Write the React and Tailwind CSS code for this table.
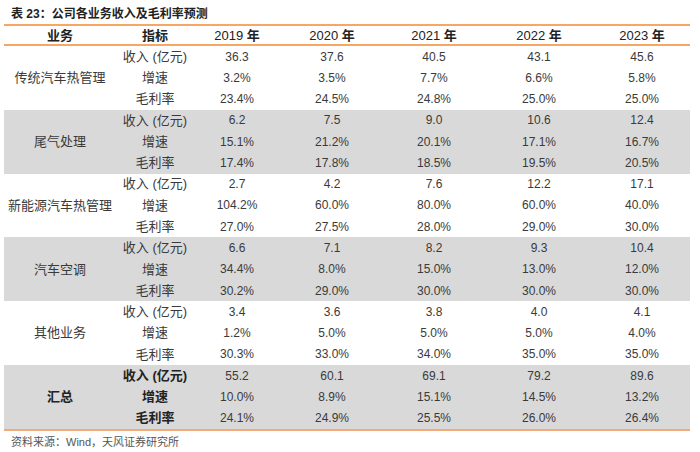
import React from 'react'

const font = { fontFamily: '"Liberation Sans", "Noto Sans CJK SC", sans-serif' }

const years = ['2019', '2020', '2021', '2022', '2023']
const metrics = ['收入 (亿元)', '增速', '毛利率']

const groups = [
  {
    name: '传统汽车热管理',
    rows: [
      ['36.3', '37.6', '40.5', '43.1', '45.6'],
      ['3.2%', '3.5%', '7.7%', '6.6%', '5.8%'],
      ['23.4%', '24.5%', '24.8%', '25.0%', '25.0%'],
    ],
  },
  {
    name: '尾气处理',
    gray: true,
    rows: [
      ['6.2', '7.5', '9.0', '10.6', '12.4'],
      ['15.1%', '21.2%', '20.1%', '17.1%', '16.7%'],
      ['17.4%', '17.8%', '18.5%', '19.5%', '20.5%'],
    ],
  },
  {
    name: '新能源汽车热管理',
    rows: [
      ['2.7', '4.2', '7.6', '12.2', '17.1'],
      ['104.2%', '60.0%', '80.0%', '60.0%', '40.0%'],
      ['27.0%', '27.5%', '28.0%', '29.0%', '30.0%'],
    ],
  },
  {
    name: '汽车空调',
    gray: true,
    rows: [
      ['6.6', '7.1', '8.2', '9.3', '10.4'],
      ['34.4%', '8.0%', '15.0%', '13.0%', '12.0%'],
      ['30.2%', '29.0%', '30.0%', '30.0%', '30.0%'],
    ],
  },
  {
    name: '其他业务',
    rows: [
      ['3.4', '3.6', '3.8', '4.0', '4.1'],
      ['1.2%', '5.0%', '5.0%', '5.0%', '4.0%'],
      ['30.3%', '33.0%', '34.0%', '35.0%', '35.0%'],
    ],
  },
  {
    name: '汇总',
    gray: true,
    bold: true,
    rows: [
      ['55.2', '60.1', '69.1', '79.2', '89.6'],
      ['10.0%', '8.9%', '15.1%', '14.5%', '13.2%'],
      ['24.1%', '24.9%', '25.5%', '26.0%', '26.4%'],
    ],
  },
]

const cols = 'grid grid-cols-[112px_78px_86px_104px_100px_110px_96px]'

export default function App() {
  return (
    <div className="w-[700px] h-[452px] bg-white text-[#3a3a3a]" style={font}>
      <div className="pl-[11px] pt-[6px] h-[24px] text-[12px] font-bold text-[#222] leading-[16px]">
        表 23：公司各业务收入及毛利率预测
      </div>
      <div className="ml-[4px] w-[686px]">
        {/* header */}
        <div className={`${cols} h-[22px] items-center border-y-2 border-[#f7a764] text-[13px] font-bold text-[#222]`}>
          <div className="text-center">业务</div>
          <div className="text-center">指标</div>
          {years.map((y) => (
            <div key={y} className="text-center">
              <span className="font-normal">{y}</span> 年
            </div>
          ))}
        </div>

        {groups.map((g) => (
          <div key={g.name} className={`${cols} h-[63.8px] ${g.gray ? 'bg-[#d9d9d9]' : ''}`}>
            <div className={`flex items-center justify-center text-[13px] ${g.bold ? 'font-bold text-[#222]' : ''}`}>
              {g.name}
            </div>
            <div className="flex flex-col">
              {metrics.map((m) => (
                <div key={m} className={`h-[21.27px] flex items-center justify-center text-[13px] ${g.bold ? 'font-bold text-[#222]' : ''}`}>
                  {m}
                </div>
              ))}
            </div>
            {[0, 1, 2, 3, 4].map((ci) => (
              <div key={ci} className="flex flex-col">
                {g.rows.map((r, ri) => (
                  <div key={ri} className="h-[21.27px] flex items-center justify-center text-[12px]">
                    {r[ci]}
                  </div>
                ))}
              </div>
            ))}
          </div>
        ))}
        <div className="h-[2px] bg-[#f4a97a]" />
      </div>
      <div className="pl-[11px] pt-[3px] text-[11px] text-[#555]">资料来源：Wind，天风证券研究所</div>
    </div>
  )
}
